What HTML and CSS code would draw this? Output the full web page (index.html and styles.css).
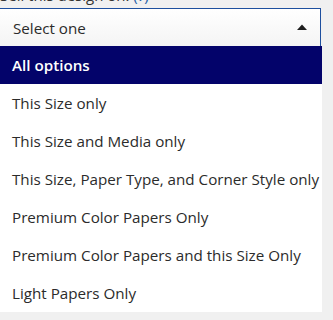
FILE: index.html
```html
<!DOCTYPE html>
<html lang="en">
<head>
  <meta charset="UTF-8" />
  <meta name="viewport" content="width=device-width, initial-scale=1.0" />
  <title>Sell this design on</title>
  <link rel="stylesheet" href="styles.css">
</head>
<body>

  <!-- Selector de producto -->
  <div class="campo">
    <label class="etiqueta">Sell this design on: <a href="#">(?)</a></label>

    <div class="selector">
      <span>Select one</span>
      <svg class="flecha" width="10" height="6" viewBox="0 0 10 6"><polygon points="0,6 5,0.5 10,6" fill="#1e1e1e"/></svg>
    </div>

    <ul class="opciones">
      <li class="activa">All options</li>
      <li>This Size only</li>
      <li>This Size and Media only</li>
      <li>This Size, Paper Type, and Corner Style only</li>
      <li>Premium Color Papers Only</li>
      <li>Premium Color Papers and this Size Only</li>
      <li>Light Papers Only</li>
    </ul>
  </div>

</body>
</html>
```

FILE: styles.css
```css
body {
  margin: 0;
  background-color: #f0f0f0;
  font-family: "Open Sans", Arial, sans-serif;
  color: #2b2b2b;
  overflow: hidden;
}

.campo {
  width: 323px;
  margin-left: -2px;
}

.etiqueta {
  display: block;
  font-size: 15px;
  line-height: 18px;
  margin-top: -14px;
  margin-bottom: 4px;
  padding-left: 2px;
  color: #333;
}

.etiqueta a {
  color: #1f5fa8;
  text-decoration: none;
}

.selector {
  height: 38px;
  box-sizing: border-box;
  border: 1px solid #1d4f9e;
  border-bottom: none;
  width: 323px;
  background: linear-gradient(#ffffff, #f4f4f4);
  display: flex;
  align-items: center;
  justify-content: space-between;
  padding: 0 13px 0 14px;
  font-size: 15.2px;
}

.flecha {
  margin-top: -1px;
}

.opciones {
  list-style: none;
  margin: 0;
  padding: 0;
  width: 324px;
  background-color: #fff;
  box-shadow: 0 8px 0 #cacaca;
}

.opciones li {
  height: 38px;
  display: flex;
  align-items: center;
  padding-left: 14px;
  font-size: 15.2px;
  white-space: nowrap;
}

.opciones li.activa {
  background-color: #03036a;
  color: #fff;
  font-weight: 600;
}
```
